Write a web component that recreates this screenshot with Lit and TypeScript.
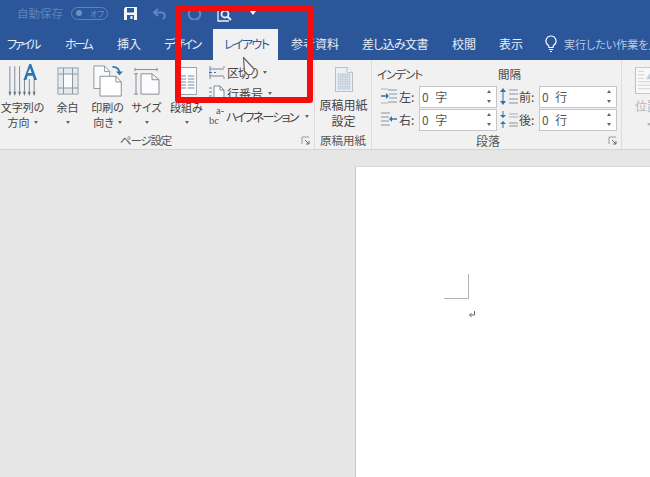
import { LitElement, html, css, svg } from "lit";
import { customElement } from "lit/decorators.js";

const caret = html`<span class="caret"></span>`;

const launcher = html`<svg class="launcher" width="10" height="10" viewBox="0 0 10 10" fill="none">
  <path d="M1 8V1h7" stroke="#9a9a9a"/><path d="M4 4l4 4M8 5v3H5" stroke="#5b6b7b"/></svg>`;

const icons = {
  save: svg`<path d="M0 1.500 1.500 0H13v13H0z" fill="#f2f5fa"/><rect x="3" y="1" width="7" height="4.500" fill="#2b579a"/><rect x="3" y="8" width="7" height="5" fill="#2b579a"/><rect x="6.500" y="9" width="2" height="3" fill="#f2f5fa"/>`,
  undo: svg`<path d="M11 12c2.500-2 2.500-6-1-6.500H2.500M6 2 2 5.500 6 9" fill="none" stroke="#6386bd" stroke-width="2"/>`,
  redo: svg`<path d="M5 2.800a5.800 5.800 0 1 0 5 0" fill="none" stroke="#6386bd" stroke-width="2"/><path d="M7.500 0v5" stroke="#6386bd" stroke-width="1.500"/>`,
  preview: svg`<path d="M1 1v12h11" fill="none" stroke="#f0f3f8" stroke-width="1.300"/><circle cx="8" cy="6" r="3.500" fill="none" stroke="#f0f3f8" stroke-width="1.800"/><path d="m10.500 8.500 3.500 3.500" stroke="#f0f3f8" stroke-width="2"/>`,
  bulb: svg`<path d="M6 1a5 5 0 0 0-3 9c.8.7 1 1.500 1 2.500h4c0-1 .2-1.800 1-2.500a5 5 0 0 0-3-9z" fill="none" stroke="#fff" stroke-width="1.200"/><path d="M4 14.500h4M5 16.500h2" stroke="#fff" stroke-width="1.200"/>`,
  direction: svg`<path d="M3 2v27M8 2v27M13 2v27M18 14v15M23 14v15M28 14v15" stroke="#7d8791"/><path d="M1.500 26 3 30l1.500-4zM6.500 26 8 30l1.500-4zM11.500 26 13 30l1.500-4zM16.500 26 18 30l1.500-4zM21.500 26 23 30l1.500-4zM26.500 26 28 30l1.500-4z" fill="#6a747e"/><path d="M17 15 23 0h2l6 15h-3l-1.500-4h-5L20 15zm4.500-6.500h4L23.800 4z" fill="#2f74b5"/>`,
  margins: svg`<rect x="1" y="1" width="20" height="26" fill="#fbfbfb" stroke="#8a949e"/><path d="M1 1h20v6H1zM1 21h20v6H1z" fill="#c9d3dc" fill-opacity=".45"/><path d="M1 7h5.500v14H1zM15.500 7H21v14h-5.500z" fill="#c9d3dc" fill-opacity=".45"/><path d="M6.500 1v26M15.500 1v26M1 7h20M1 21h20" stroke="#8a9aa8"/>`,
  orient: svg`<path d="M1 1h12l6 6v18H1z" fill="#fafafa" stroke="#8a949e"/><path d="M13 1v6h6" fill="none" stroke="#8a949e"/><path d="M8 12h18l6 6v15H8z" fill="#fff" stroke="#7d8791"/><path d="M26 12v6h6" fill="none" stroke="#7d8791"/><path d="M22 2c5 0 8 2 8 7" fill="none" stroke="#2f74b5" stroke-width="2"/><path d="m26 7 4 4 4-4z" fill="#2f74b5"/>`,
  size: svg`<path d="M1 3h22M1 1v4M23 1v4M2 8v24M0 8h4M0 32h4" stroke="#7d8791"/><path d="M7 8h11l7 7v17H7z" fill="#fbfbfb" stroke="#7d8791"/><path d="M18 8v7h7" fill="none" stroke="#7d8791"/>`,
  columns: svg`<rect x=".5" y=".5" width="21" height="27" fill="#fbfbfb" stroke="#9aa3ab"/><path d="M3 9h7M12 9h7M3 12h7M12 12h7M3 15h7M12 15h7M3 18h7M12 18h7M3 21h7M12 21h7" stroke="#6f8aa3"/>`,
  breaks: svg`<path d="M1 0v13M15 0v2M15 13v-2M1 3h14M1 10h14" fill="none" stroke="#7d8791"/><path d="M0 6.500h3M5 6.500h2" stroke="#2f74b5"/>`,
  lineNo: svg`<path d="M5 1h6l4 4v11H5z" fill="#fbfbfb" stroke="#7d8791"/><path d="M11 1v4h4" fill="none" stroke="#7d8791"/><path d="M0 3h3M0 7h3M0 11h3M0 15h3" stroke="#5b86b0"/>`,
  manuscript: svg`<path d="M.5.500h13l6 6v24H.500z" fill="#eef0f3" stroke="#a9b1b9"/><path d="M13.500.500v6h6" fill="#fff" stroke="#a9b1b9"/><path d="M3 8h14v20H3z" fill="#b9c8d8"/><path d="M5 8v20M7.500 8v20M10 8v20M12.500 8v20M15 8v20M3 11h14M3 14h14M3 17h14M3 20h14M3 23h14M3 26h14" stroke="#e6ecf2" stroke-width=".7"/>`,
  indentL: svg`<path d="M8 2h9M9 6h8M9 10h8M8 14h9" stroke="#8a949e"/><path d="M1 1h7M1 15h7" stroke="#b0b6bc"/><path d="M1 8h6" stroke="#2f74b5" stroke-width="1.500"/><path d="m6 5 3 3-3 3z" fill="#2f74b5"/>`,
  indentR: svg`<path d="M1 2h9M1 6h8M1 10h8M1 14h9" stroke="#8a949e"/><path d="M11 8h6" stroke="#2f74b5" stroke-width="1.500"/><path d="m12 5-3 3 3 3z" fill="#2f74b5"/>`,
  spaceB: svg`<path d="M3 3v11" stroke="#2f74b5"/><path d="m0 4 3-4 3 4zM0 13l3 4 3-4z" fill="#2f74b5"/><path d="M9 2h9M9 6h9M9 11h9M9 15h9" stroke="#8a949e"/>`,
  spaceA: svg`<path d="M3 0v5M3 12v5" stroke="#2f74b5"/><path d="m0 4 3 3 3-3zM0 13l3-3 3 3z" fill="#2f74b5"/><path d="M9 3h9M9 6h9" stroke="#a9b1b9"/><path d="M9 12h9M9 15h9" stroke="#8a949e"/>`,
  position: svg`<rect x=".5" y=".5" width="30" height="30" fill="#f8f8f8" stroke="#c2c2c2"/><path d="M3 5h6M3 9h6M3 13h6M3 17h24M3 21h24M3 25h24M22 5h6M22 9h6" stroke="#d0d0d0"/><path d="M11 14l4-7 4 7z" fill="#c3cfda"/>`,
};

const ic = (k: keyof typeof icons, w: number, h: number, vw = w, vh = h) =>
  html`<svg width=${w} height=${h} viewBox="0 0 ${vw} ${vh}" preserveAspectRatio="none">${icons[k]}</svg>`;

@customElement("app-root")
export class AppRoot extends LitElement {
  static styles = css`
    :host {
      display: block;
      position: relative;
      width: 650px;
      height: 477px;
      overflow: hidden;
      background: #e6e6e6;
      font-family: "Noto Sans CJK JP", "Noto Sans", sans-serif;
      font-feature-settings: "palt";
      color: #444;
    }
    .qat {
      height: 29px;
      box-sizing: border-box;
      padding: 0 0 3px 17px;
      background: #2b579a;
      display: flex;
      align-items: center;
    }
    .autosave {
      font-size: 11.500px;
      color: #5f83ba;
      width: 54px;
    }
    .toggle {
      width: 37px;
      height: 13px;
      box-sizing: border-box;
      border: 1px solid #5f83ba;
      border-radius: 7px;
      display: flex;
      align-items: center;
      gap: 8px;
      padding-left: 4px;
      font-size: 8px;
      color: #6f90c2;
    }
    .toggle i {
      width: 6px;
      height: 6px;
      border-radius: 50%;
      background: #6f90c2;
    }
    .qat-icons {
      display: flex;
      align-items: center;
      margin-left: 16px;
      gap: 15px;
    }
    .qat-icons .gap {
      margin-left: 6px;
    }
    .qat-icons .low {
      margin-top: 3px;
    }
    .qat-drop {
      width: 0;
      height: 0;
      margin-left: 3px;
      border: 3px solid transparent;
      border-top: 4px solid #fff;
      border-bottom: 0;
      box-shadow: 0 -2px 0 -1px #fff;
    }
    .tabs {
      height: 31px;
      background: #2b579a;
      display: grid;
      grid-template-columns: 53px 52px 47px 61px 65px 72px 90px 47px 46px 1fr;
      white-space: nowrap;
      font-size: 12px;
      color: #e9eef6;
      overflow: hidden;
    }
    .tab {
      padding: 0 0 2px 12px;
      display: flex;
      align-items: center;
    }
    .tab:first-child {
      padding-left: 7px;
    }
    .tab.k1 { letter-spacing: -2.400px; }
    .tab.k2 { letter-spacing: -2.900px; }
    .tab.k3 { letter-spacing: -2px; }
    .tab.k4 { letter-spacing: -1.600px; }
    .tab.mix { letter-spacing: -0.700px; }
    .tab.active {
      background: #f1f1f1;
      color: #2b579a;
      padding-left: 11px;
    }
    .tab.after {
      padding-left: 13px;
    }
    .tell {
      display: flex;
      align-items: center;
      gap: 7px;
      padding: 0 0 2px 12px;
      color: #b9c9e2;
      font-size: 11px;
    }
    .ribbon {
      height: 90px;
      box-sizing: border-box;
      background: #f1f1f1;
      border-bottom: 1px solid #d5d5d5;
      display: flex;
      font-size: 11px;
      line-height: 15px;
      white-space: nowrap;
    }
    .group {
      display: flex;
      flex-direction: column;
      box-sizing: border-box;
      border-right: 1px solid #dcdcdc;
      flex: none;
    }
    .g-page { width: 315px; }
    .g-ms { width: 57px; }
    .g-para { width: 250px; }
    .g-pos { flex: 1; border-right: 0; padding-left: 13px; }
    .g-body {
      flex: 1;
      min-height: 0;
    }
    .g-label {
      height: 17px;
      flex: none;
      display: grid;
      grid-template-columns: 1fr auto 1fr;
      align-items: center;
      text-align: center;
      color: #555;
      font-size: 11.500px;
    }
    .g-page .g-label {
      grid-template-columns: 120px auto 1fr;
      letter-spacing: -1.200px;
    }
    .g-para .g-label {
      grid-template-columns: 104px auto 1fr;
      font-size: 12px;
    }
    .launcher {
      justify-self: end;
      margin-right: 3px;
    }
    .page-body {
      display: grid;
      grid-template-columns: 45px 45px 35px 43px 37px auto;
      padding-top: 3px;
    }
    .big {
      display: flex;
      flex-direction: column;
      align-items: center;
      text-align: center;
    }
    .big .ico {
      height: 37px;
      flex: none;
      display: flex;
      align-items: flex-start;
      justify-content: center;
      box-sizing: border-box;
    }
    .big .ico.d1 { padding-top: 1px; }
    .big .ico.d2 { padding-top: 2px; }
    .big .ico.d4 { padding-top: 4px; }
    .big .t {
      height: 15px;
      display: flex;
      align-items: center;
      gap: 4px;
    }
    .caret {
      display: inline-block;
      width: 0;
      height: 0;
      border: 2.500px solid transparent;
      border-top: 3px solid #666;
      border-bottom: 0;
      flex: none;
    }
    .small {
      margin-left: 4px;
      display: flex;
      flex-direction: column;
      gap: 3px;
    }
    .small .row {
      height: 18px;
      display: flex;
      align-items: center;
      gap: 2px;
      font-size: 12px;
    }
    .small .row .caret {
      margin-left: 3px;
    }
    .small .row.hyph {
      margin-top: 2px;
      gap: 4px;
    }
    .hyph .kana {
      letter-spacing: -1.750px;
    }
    .tight {
      letter-spacing: -1px;
    }
    .hy {
      font-family: "Liberation Serif", serif;
      font-size: 10.500px;
      line-height: 10px;
      width: 13px;
      color: #555;
      white-space: normal;
    }
    .hy b {
      display: block;
      font-weight: 400;
      padding-left: 7px;
    }
    .ms-body {
      padding: 7px 0 0 1px;
      font-size: 12px;
      line-height: 16px;
    }
    .big.ms-body .ico {
      height: 30px;
    }
    .para-body {
      display: grid;
      grid-template-columns: 120px 120px;
      padding: 6px 0 0 5px;
    }
    .head {
      height: 19px;
      font-size: 11.500px;
      line-height: 16px;
    }
    .head.kana {
      letter-spacing: -1px;
    }
    .head.space {
      padding-left: 1px;
    }
    .spin-row {
      display: flex;
      align-items: center;
      height: 23px;
    }
    .spin-row .sic {
      width: 22px;
      padding-left: 3px;
      box-sizing: border-box;
      display: flex;
      flex: none;
    }
    .spin-row .lab {
      width: 20px;
      flex: none;
      font-size: 12px;
    }
    .field {
      width: 78px;
      height: 22px;
      box-sizing: border-box;
      background: #fff;
      border: 1px solid #c6c6c6;
      display: flex;
      align-items: center;
      justify-content: space-between;
      padding: 0 5px 0 2px;
      font-size: 12px;
      letter-spacing: 2px;
      color: #555;
    }
    .arrows {
      display: flex;
      flex-direction: column;
      gap: 7px;
    }
    .arrows i {
      width: 0;
      height: 0;
      border: 2px solid transparent;
    }
    .arrows i:first-child {
      border-bottom: 3px solid #666;
      border-top: 0;
    }
    .arrows i:last-child {
      border-top: 3px solid #666;
      border-bottom: 0;
    }
    .pos-body {
      padding-top: 7px;
      color: #b5b5b5;
      font-size: 12px;
    }
    .pos-body svg {
      display: block;
    }
    .pos-body .pl {
      margin-top: 4px;
    }
    .pos-body .cr {
      margin: 3px 0 0 12px;
      border-top-color: #b5b5b5;
    }
    .canvas {
      height: 327px;
      display: flex;
      justify-content: flex-end;
      padding-top: 17px;
      box-sizing: border-box;
    }
    .doc {
      width: 295px;
      background: #fff;
      border-left: 1px solid #c8c8c8;
      box-shadow: 0 -1px 0 #d6d6d6;
      padding: 107px 0 0 88px;
      box-sizing: border-box;
    }
    .mark {
      width: 25px;
      height: 25px;
      box-sizing: border-box;
      border-right: 1px solid #b5b5b5;
      border-bottom: 1px solid #b5b5b5;
    }
    .para-mark {
      display: block;
      margin: 11px 0 0 24px;
    }
    .red {
      position: absolute;
      left: 175px;
      top: 5px;
      width: 138px;
      height: 98px;
      box-sizing: border-box;
      border: 6.500px solid #f40d0d;
      border-radius: 3px;
    }
    .pointer {
      position: absolute;
      left: 242px;
      top: 56px;
    }
  `;

  private big(icon: unknown, lines: unknown[], drop = "") {
    return html`<div class="big"><div class="ico ${drop}">${icon}</div>
      ${lines.map((l) => html`<div class="t">${l}</div>`)}</div>`;
  }

  private spin(k: keyof typeof icons, label: string, unit: string) {
    return html`<div class="spin-row">
      <span class="sic">${ic(k, 18, 17)}</span>
      <span class="lab">${label}</span>
      <div class="field"><span>0 ${unit}</span><span class="arrows"><i></i><i></i></span></div>
    </div>`;
  }

  render() {
    const tabs: [string, string][] = [
      ["ファイル", "k1"],
      ["ホーム", "k2"],
      ["挿入", ""],
      ["デザイン", "k3"],
      ["レイアウト", "k4 active"],
      ["参考資料", "after"],
      ["差し込み文書", "mix"],
      ["校閲", ""],
      ["表示", ""],
    ];
    return html`
      <div class="qat">
        <span class="autosave">自動保存</span>
        <span class="toggle"><i></i>オフ</span>
        <span class="qat-icons">
          ${ic("save", 13, 13)}${ic("undo", 14, 13)}
          <span class="gap">${ic("redo", 15, 14)}</span>
          <span class="low">${ic("preview", 15, 14)}</span>
          <span class="qat-drop"></span>
        </span>
      </div>
      <div class="tabs">
        ${tabs.map(([t, c]) => html`<div class="tab ${c}">${t}</div>`)}
        <div class="tell">${ic("bulb", 12, 18)}実行したい作業を入力してください</div>
      </div>
      <div class="ribbon">
        <section class="group g-page">
          <div class="g-body page-body">
            ${this.big(ic("direction", 31, 33, 32, 31), ["文字列の", html`方向 ${caret}`], "d1")}
            ${this.big(ic("margins", 22, 28), ["余白", caret], "d4")}
            ${this.big(ic("orient", 30, 32, 34, 34), ["印刷の", html`向き ${caret}`], "d2")}
            ${this.big(ic("size", 26, 28, 26, 33), ["サイズ", caret], "d4")}
            ${this.big(ic("columns", 20, 28, 22, 28), ["段組み", caret], "d4")}
            <div class="small">
              <div class="row">${ic("breaks", 16, 13)}<span class="tight">区切り</span> ${caret}</div>
              <div class="row">${ic("lineNo", 16, 16)}行番号 ${caret}</div>
              <div class="row hyph"><span class="hy"><b>a-</b>bc</span><span class="kana">ハイフネーション</span> ${caret}</div>
            </div>
          </div>
          <div class="g-label"><span></span><span>ページ設定</span>${launcher}</div>
        </section>
        <section class="group g-ms">
          <div class="g-body big ms-body">
            <div class="ico">${ic("manuscript", 18, 25, 20, 31)}</div>
            <div>原稿用紙</div><div>設定</div>
          </div>
          <div class="g-label"><span></span>原稿用紙<span></span></div>
        </section>
        <section class="group g-para">
          <div class="g-body para-body">
            <div>
              <div class="head kana">インデント</div>
              ${this.spin("indentL", "左:", "字")}
              ${this.spin("indentR", "右:", "字")}
            </div>
            <div>
              <div class="head space">間隔</div>
              ${this.spin("spaceB", "前:", "行")}
              ${this.spin("spaceA", "後:", "行")}
            </div>
          </div>
          <div class="g-label"><span></span>段落${launcher}</div>
        </section>
        <section class="group g-pos">
          <div class="g-body pos-body">
            ${ic("position", 31, 27, 31, 31)}
            <div class="pl">位置</div>
            <span class="caret cr"></span>
          </div>
        </section>
      </div>
      <div class="canvas">
        <div class="doc">
          <div class="mark"></div>
          <svg class="para-mark" width="8" height="8" viewBox="0 0 8 8" fill="none">
            <path d="M6.500 1v4H2" stroke="#666"/><path d="M3.500 3 1.500 5l2 2" stroke="#666"/>
          </svg>
        </div>
      </div>
      <div class="red"></div>
      <svg class="pointer" width="15" height="21" viewBox="0 0 15 21">
        <path d="M1.500 1.500 2.500 15 5.500 18.500H9.500L12.500 13.500 7 7.500Z" fill="#f6f6f6" stroke="#666" stroke-width="1.200" stroke-linejoin="round"/>
      </svg>
    `;
  }
}
